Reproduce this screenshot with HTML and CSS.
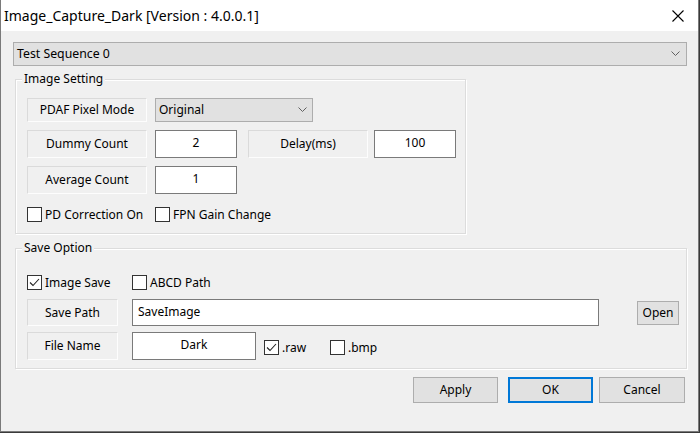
FILE: index.html
```html
<!DOCTYPE html>
<html>
<head>
<meta charset="utf-8">
<link rel="stylesheet" href="styles.css">
</head>
<body>
<div class="window">
  <div class="titlebar">
    <span class="title">Image_Capture_Dark [Version : 4.0.0.1]</span>
    <svg class="close" width="12" height="12" viewBox="0 0 12 12"><path d="M0.5 0.5 L11.5 11.5 M11.5 0.5 L0.5 11.5" stroke="#000" stroke-width="1.1" fill="none"/></svg>
  </div>
  <div class="client">
    <div class="combo seq">
      <span>Test Sequence 0</span>
      <svg class="chev" width="9" height="5" viewBox="0 0 9 5"><path d="M0.5 0.5 L4.5 4.5 L8.5 0.5" stroke="#606060" fill="none"/></svg>
    </div>

    <div class="group g1">
      <span class="legend">Image Setting</span>
      <div class="row r1">
        <div class="lbl w120">PDAF Pixel Mode</div>
        <div class="combo mode">
          <span>Original</span>
          <svg class="chev" width="9" height="5" viewBox="0 0 9 5"><path d="M0.5 0.5 L4.5 4.5 L8.5 0.5" stroke="#606060" fill="none"/></svg>
        </div>
      </div>
      <div class="row r2">
        <div class="lbl w120">Dummy Count</div>
        <div class="input w82">2</div>
        <div class="lbl w120 delay">Delay(ms)</div>
        <div class="input w82 val100">100</div>
      </div>
      <div class="row r3">
        <div class="lbl w120">Average Count</div>
        <div class="input w82">1</div>
      </div>
      <div class="row r4">
        <label class="check c128"><span class="box"></span>PD Correction On</label>
        <label class="check"><span class="box"></span>FPN Gain Change</label>
      </div>
    </div>

    <div class="group g2">
      <span class="legend">Save Option</span>
      <div class="row s1">
        <label class="check c105"><span class="box"><svg width="13" height="13" viewBox="0 0 13 13"><path d="M2 6.5 L5 9.5 L11 3" stroke="#222" stroke-width="1.1" fill="none"/></svg></span>Image Save</label>
        <label class="check"><span class="box"></span>ABCD Path</label>
      </div>
      <div class="row s2">
        <div class="lbl w90">Save Path</div>
        <div class="input path">SaveImage</div>
        <div class="btn open">Open</div>
      </div>
      <div class="row s3">
        <div class="lbl w90">File Name</div>
        <div class="input name">Dark</div>
        <label class="check c52"><span class="box"><svg width="13" height="13" viewBox="0 0 13 13"><path d="M2 6.5 L5 9.5 L11 3" stroke="#222" stroke-width="1.1" fill="none"/></svg></span>.raw</label>
        <label class="check"><span class="box"></span>.bmp</label>
      </div>
    </div>

    <div class="buttons">
      <div class="btn dlg">Apply</div>
      <div class="btn dlg ok">OK</div>
      <div class="btn dlg cancel">Cancel</div>
    </div>
  </div>
</div>
</body>
</html>
```

FILE: styles.css
```css
* { box-sizing: border-box; }
html, body { margin: 0; padding: 0; }
body {
  width: 700px;
  height: 433px;
  background: #3a3a3a;
  font-family: "Noto Sans", "Open Sans", sans-serif;
  font-size: 12px;
  color: #000;
  overflow: hidden;
}
.window {
  width: 699px;
  height: 432px;
  background: #f0f0f0;
  border-left: 1px solid #7a7a7a;
  border-right: 1px solid #7a7a7a;
  border-bottom: 1px solid #7a7a7a;
  display: flex;
  flex-direction: column;
}
.titlebar {
  height: 31px;
  background: #fff;
  display: flex;
  align-items: center;
  justify-content: space-between;
  padding: 0 14px 1px 3px;
  flex: none;
}
.title {
  font-size: 14px;
}
.close { display: block; margin-top: 1px; }
.client {
  display: flex;
  flex-direction: column;
  align-items: flex-start;
}
.combo {
  background: #e1e1e1;
  border: 1px solid #adadad;
  display: flex;
  align-items: center;
  justify-content: space-between;
  padding: 0 6px 1px 3px;
}
.combo .chev { display: block; }
.seq {
  margin: 11px 0 0 12px;
  width: 674px;
  height: 24px;
  font-size: 12.3px;
}
.mode {
  width: 158px;
  height: 24px;
  padding-right: 5px;
}
.group {
  position: relative;
  border: 1px solid #dcdcdc;
  box-shadow: inset 1px 1px 0 #fff, 1px 1px 0 #fff;
  margin-left: 14px;
  display: flex;
  flex-direction: column;
}
.legend {
  position: absolute;
  top: -9px;
  left: 6px;
  padding: 0 2px;
  background: #f0f0f0;
  line-height: 16px;
}
.g1 {
  margin-top: 13px;
  width: 451px;
  height: 155px;
  padding: 18px 0 0 11px;
}
.g2 {
  margin-top: 14px;
  width: 672px;
  height: 121px;
  padding: 25px 0 0 11px;
}
.row { display: flex; align-items: stretch; }
.r1 { height: 24px; gap: 8px; }
.r2 { height: 28px; margin-top: 8px; gap: 8px; }
.r3 { height: 28px; margin-top: 8px; gap: 8px; }
.r4 { height: 16px; margin-top: 12px; align-items: center; }
.s1 { height: 16px; align-items: center; }
.s2 { height: 27px; margin-top: 9px; gap: 14px; }
.s3 { height: 28px; margin-top: 6px; gap: 14px; align-items: stretch; }
.lbl {
  background: #f0f0f0;
  border: 1px solid;
  border-color: #dadada #fdfdfd #fdfdfd #dadada;
  display: flex;
  align-items: center;
  justify-content: center;
  padding-bottom: 1px;
}
.w120 { width: 120px; }
.w90 { width: 91px; }
.delay { margin-left: 3px; }
.val100 { margin-left: -2px; }
.input {
  background: #fff;
  border: 1px solid #7a7a7a;
  display: flex;
  align-items: center;
  justify-content: center;
  padding-bottom: 3px;
}
.w82 { width: 82px; }
.path {
  width: 467px;
  justify-content: flex-start;
  padding-left: 5px;
}
.name { width: 124px; }
.check {
  display: flex;
  align-items: center;
  gap: 3px;
  white-space: nowrap;
}
.check .box {
  width: 15px;
  height: 15px;
  background: #fff;
  border: 1px solid #333;
  display: flex;
  align-items: center;
  justify-content: center;
  flex: none;
}
.check .box svg { display: block; }
.c128 { width: 128px; }
.c105 { width: 105px; }
.c52 { width: 52px; margin-left: -6px; }
.s3 .check { align-self: center; margin-top: 2px; }
.btn {
  background: #e1e1e1;
  border: 1px solid #adadad;
  display: flex;
  align-items: center;
  justify-content: center;
  padding-bottom: 1px;
}
.open {
  width: 42px;
  height: 24px;
  align-self: center;
  margin-left: 24px;
}
.buttons {
  margin: 8px 0 0 412px;
  display: flex;
  height: 26px;
}
.dlg { width: 85px; height: 26px; }
.ok {
  margin-left: 10px;
  border: 2px solid #0078d7;
}
.cancel { margin-left: 6px; width: 86px; }
```
